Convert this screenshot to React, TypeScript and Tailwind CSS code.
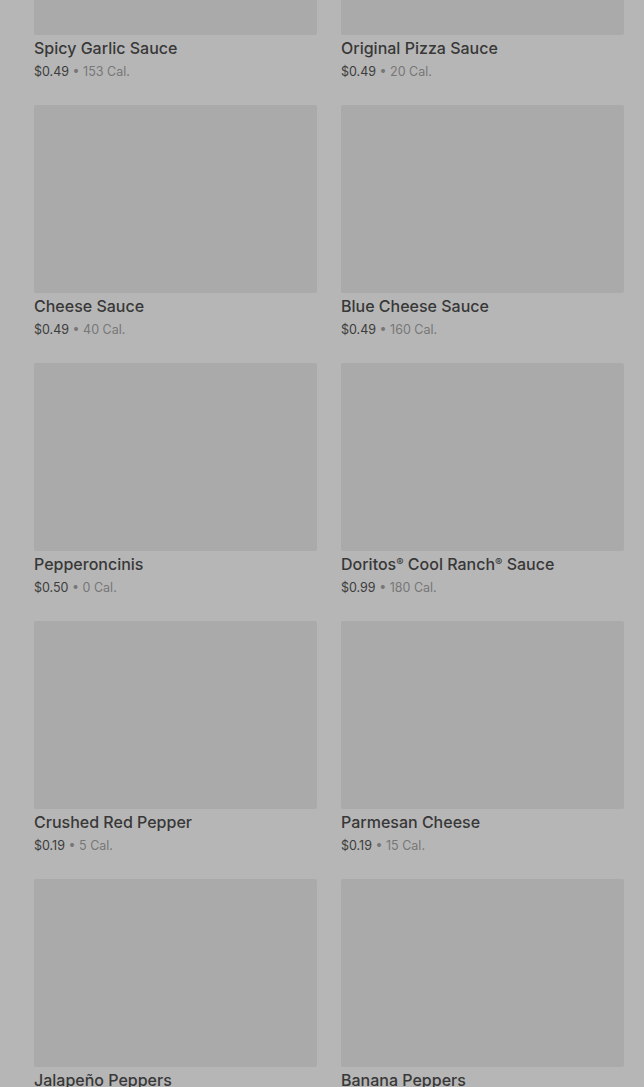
import React from "react";

const R = () => <span className="text-[11px] align-[4px] leading-none">®</span>;

const items: { name: React.ReactNode; key: string; price: string; cal: string }[] = [
  { key: "a", name: "Spicy Garlic Sauce", price: "$0.49", cal: "153 Cal." },
  { key: "b", name: "Original Pizza Sauce", price: "$0.49", cal: "20 Cal." },
  { key: "c", name: "Cheese Sauce", price: "$0.49", cal: "40 Cal." },
  { key: "d", name: "Blue Cheese Sauce", price: "$0.49", cal: "160 Cal." },
  { key: "e", name: "Pepperoncinis", price: "$0.50", cal: "0 Cal." },
  {
    key: "f",
    name: (
      <>
        Doritos
        <R /> Cool Ranch
        <R /> Sauce
      </>
    ),
    price: "$0.99",
    cal: "180 Cal.",
  },
  { key: "g", name: "Crushed Red Pepper", price: "$0.19", cal: "5 Cal." },
  { key: "h", name: "Parmesan Cheese", price: "$0.19", cal: "15 Cal." },
  { key: "i", name: "Jalapeño Peppers", price: "$0.19", cal: "10 Cal." },
  { key: "j", name: "Banana Peppers", price: "$0.19", cal: "10 Cal." },
];

export default function App() {
  return (
    <div
      className="w-[644px] h-[1087px] overflow-hidden bg-[#b6b6b6]"
      style={{ fontFamily: "Inter, Roboto, sans-serif" }}
    >
      <div className="mt-[-153px] pl-[34px] pr-[20px] grid grid-cols-2 gap-x-[24px] gap-y-[22px]">
        {items.map((it) => (
          <div key={it.key} className="flex flex-col">
            <div className="h-[188px] bg-[#aaaaaa] rounded-[2px]" />
            <div className="mt-[2px] text-[16px] leading-[22px] font-medium text-[#383838]">
              {it.name}
            </div>
            <div className="mt-[2px] text-[12.5px] leading-[22px] text-[#3c3c3c]">
              {it.price}
              <span className="text-[#777777]"> • {it.cal}</span>
            </div>
          </div>
        ))}
      </div>
    </div>
  );
}
